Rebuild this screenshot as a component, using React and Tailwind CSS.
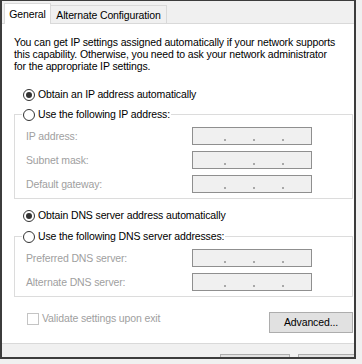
import React from "react";

const ipFields = ["IP address:", "Subnet mask:", "Default gateway:"];
const dnsFields = ["Preferred DNS server:", "Alternate DNS server:"];

function Radio({ checked }) {
  return (
    <span className="flex h-[12px] w-[12px] shrink-0 items-center justify-center rounded-full border border-[#333333] bg-white">
      {checked && <span className="h-[6px] w-[6px] rounded-full bg-[#333333]" />}
    </span>
  );
}

function RadioOption({ checked, label }) {
  return (
    <div className="flex h-[13px] items-center gap-[3px] text-black">
      <Radio checked={checked} />
      <span className="whitespace-nowrap">{label}</span>
    </div>
  );
}

function IpBox() {
  return (
    <div className="flex h-[18px] w-[120px] items-start gap-[27px] border border-[#8f8f8f] bg-[#f0f0f0] pl-[31px] pt-[11px]">
      <span className="h-[2px] w-[2px] bg-[#a8a8a8]" />
      <span className="h-[2px] w-[2px] bg-[#a8a8a8]" />
      <span className="h-[2px] w-[2px] bg-[#a8a8a8]" />
    </div>
  );
}

function FieldRow({ label }) {
  return (
    <div className="flex h-[18px] items-center">
      <span className="w-[166px] whitespace-nowrap text-[#a0a0a0]">{label}</span>
      <IpBox />
    </div>
  );
}

function GroupBox({ label, fields }) {
  return (
    <fieldset className="w-[339px] border border-[#dcdcdc]">
      <legend className="ml-[7px] bg-white px-[1px]">
        <RadioOption label={label} />
      </legend>
      <div className="flex flex-col gap-[6px] pb-[5px] pl-[11px] pt-[6px]">
        {fields.map((field) => (
          <FieldRow key={field} label={field} />
        ))}
      </div>
    </fieldset>
  );
}

export default function App() {
  return (
    <div className="h-[364px] w-[362px] overflow-hidden bg-[#f0f0f0] font-['Liberation_Sans',sans-serif] text-[10.5px] leading-[13px] tracking-[-0.13px]">
      <div className="flex h-[359px] w-[356px] flex-col border-x-2 border-b-2 border-t border-[#3c3c3c] bg-[#f0f0f0]">
        <div className="flex h-[22px] items-end pl-[2px]">
          <div className="relative z-10 -mb-px flex h-[21px] w-[47px] items-center justify-center border border-b-0 border-[#d9d9d9] bg-white text-black">
            General
          </div>
          <div className="-ml-px flex h-[18px] w-[117px] items-center justify-center border border-b-0 border-[#d9d9d9] bg-[#f0f0f0] pt-[1px] text-black">
            Alternate Configuration
          </div>
        </div>

        <div className="flex h-[321px] flex-col border-y border-[#d9d9d9] bg-white pl-[12px]">
          <p className="mt-[12px] leading-[12px] text-black">
            <span className="block whitespace-nowrap">
              You can get IP settings assigned automatically if your network supports
            </span>
            <span className="block whitespace-nowrap">
              this capability. Otherwise, you need to ask your network administrator
            </span>
            <span className="block whitespace-nowrap">for the appropriate IP settings.</span>
          </p>

          <div className="mt-[16px] pl-[9px]">
            <RadioOption checked label="Obtain an IP address automatically" />
          </div>
          <div className="mt-[7px]">
            <GroupBox label="Use the following IP address:" fields={ipFields} />
          </div>

          <div className="mt-[10px] pl-[9px]">
            <RadioOption checked label="Obtain DNS server address automatically" />
          </div>
          <div className="mt-[8px]">
            <GroupBox label="Use the following DNS server addresses:" fields={dnsFields} />
          </div>

          <div className="mt-[15px] flex w-[339px] items-start justify-between">
            <label className="ml-[13px] flex h-[13px] items-center gap-[3px] text-[#a0a0a0]">
              <span className="h-[12px] w-[12px] border border-[#c4c4c4] bg-white" />
              Validate settings upon exit
            </label>
            <button
              type="button"
              className="flex h-[21px] w-[84px] items-center justify-center border border-[#adadad] bg-[#e1e1e1] text-black"
            >
              Advanced...
            </button>
          </div>
        </div>

        <div className="flex h-[13px] gap-[8px] overflow-hidden pl-[218px] pt-[10px]">
          <div className="h-[20px] w-[70px] shrink-0 border border-[#adadad] bg-[#e1e1e1]" />
          <div className="h-[20px] w-[70px] shrink-0 border border-[#adadad] bg-[#e1e1e1]" />
        </div>
      </div>
    </div>
  );
}
